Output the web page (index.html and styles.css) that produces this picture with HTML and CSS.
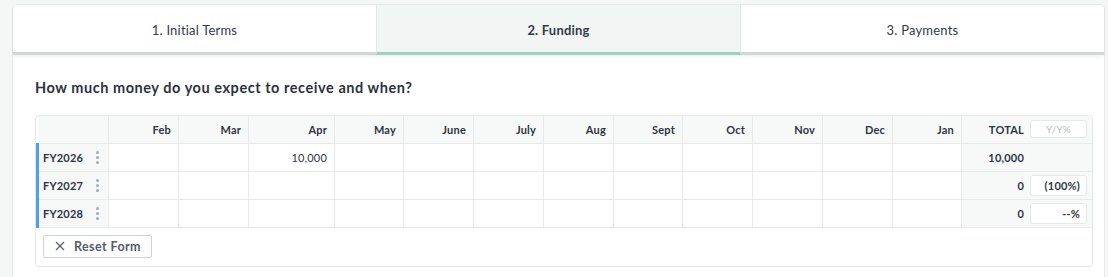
FILE: index.html
```html
<!DOCTYPE html>
<html>
<head>
<meta charset="utf-8">
<link rel="stylesheet" href="styles.css">
</head>
<body>
<div class="card">
  <div class="tabs">
    <div class="tab">1. Initial Terms</div>
    <div class="tab active">2. Funding</div>
    <div class="tab">3. Payments</div>
  </div>
  <div class="content">
    <h2 class="question">How much money do you expect to receive and when?</h2>
    <div class="grid-box">
      <table class="grid">
        <colgroup>
          <col class="c-label">
          <col class="c-m"><col class="c-m"><col class="c-apr"><col class="c-s">
          <col class="c-m"><col class="c-m"><col class="c-m"><col class="c-s">
          <col class="c-m"><col class="c-m"><col class="c-m"><col class="c-s">
          <col class="c-total">
        </colgroup>
        <thead>
          <tr>
            <th class="label-cell"></th>
            <th>Feb</th><th>Mar</th><th>Apr</th><th>May</th><th>June</th><th>July</th>
            <th>Aug</th><th>Sept</th><th>Oct</th><th>Nov</th><th>Dec</th><th>Jan</th>
            <th class="total-cell"><div class="total-wrap"><span>TOTAL</span><span class="pct placeholder">Y/Y%</span></div></th>
          </tr>
        </thead>
        <tbody>
          <tr>
            <td class="label-cell"><div class="label-wrap"><span>FY2026</span><span class="kebab"><i></i><i></i><i></i></span></div></td>
            <td></td><td></td><td>10,000</td><td></td><td></td><td></td>
            <td></td><td></td><td></td><td></td><td></td><td></td>
            <td class="total-cell"><div class="total-wrap"><span>10,000</span><span class="pct empty"></span></div></td>
          </tr>
          <tr>
            <td class="label-cell"><div class="label-wrap"><span>FY2027</span><span class="kebab"><i></i><i></i><i></i></span></div></td>
            <td></td><td></td><td></td><td></td><td></td><td></td>
            <td></td><td></td><td></td><td></td><td></td><td></td>
            <td class="total-cell"><div class="total-wrap"><span>0</span><span class="pct">(100%)</span></div></td>
          </tr>
          <tr>
            <td class="label-cell"><div class="label-wrap"><span>FY2028</span><span class="kebab"><i></i><i></i><i></i></span></div></td>
            <td></td><td></td><td></td><td></td><td></td><td></td>
            <td></td><td></td><td></td><td></td><td></td><td></td>
            <td class="total-cell"><div class="total-wrap"><span>0</span><span class="pct">--%</span></div></td>
          </tr>
        </tbody>
      </table>
      <div class="grid-footer">
        <button class="reset-btn">
          <svg width="10" height="10" viewBox="0 0 10 10"><path d="M1 1L9 9M9 1L1 9" stroke="#5b6270" stroke-width="1.3" fill="none"/></svg>
          <span>Reset Form</span>
        </button>
      </div>
    </div>
  </div>
</div>
</body>
</html>
```

FILE: styles.css
```css
* { box-sizing: border-box; }
html, body { margin: 0; padding: 0; }
body {
  background: #f5f6f6;
  font-family: "Lato", "Liberation Sans", sans-serif;
  color: #2e3544;
  padding: 4px 3px 0 12px;
}
.card {
  background: #fff;
  border: 1px solid #e6e8e8;
  border-bottom: none;
  border-radius: 5px 5px 0 0;
  height: 280px;
}
.tabs {
  display: flex;
  height: 50px;
  box-shadow: 0 2px 3px rgba(0,0,0,0.06);
}
.tab {
  flex: 1;
  display: flex;
  align-items: center;
  justify-content: center;
  font-size: 13px;
  letter-spacing: 0.2px;
  color: #333a48;
  border-bottom: 3px solid #d3d7da;
  padding-top: 2px;
}
.tab.active {
  background: #f1f6f5;
  border-bottom-color: #9fd1c2;
  border-left: 1px solid #e3e8e7;
  border-right: 1px solid #e3e8e7;
  font-weight: 700;
}
.tab:first-child { border-top-left-radius: 5px; }
.content {
  padding: 0 11px 0 22px;
}
.question {
  margin: 0;
  padding-top: 24px;
  height: 60px;
  font-size: 14.5px;
  font-weight: 700;
  color: #2b3240;
  letter-spacing: 0.55px;
}
.grid-box {
  border: 1px solid #e5e7e7;
  border-radius: 4px;
  overflow: hidden;
}
.grid {
  border-collapse: collapse;
  table-layout: fixed;
  width: 100%;
  font-size: 11px;
  letter-spacing: 0.2px;
}
.c-label { width: 71px; }
.c-m { width: 70px; }
.c-s { width: 69px; }
.c-apr { width: 86px; }
.c-total { width: auto; }
.grid th, .grid td {
  border-right: 1px solid #e8eaea;
  border-bottom: 1px solid #e8eaea;
  text-align: right;
  padding: 0 7px 0 4px;
  white-space: nowrap;
}
.grid th {
  height: 27px;
  background: #f7f8f8;
  font-weight: 700;
  color: #2e3544;
}
.grid td {
  height: 28px;
  color: #2e3544;
}
.grid th:last-child, .grid td:last-child { border-right: none; }
.grid td.label-cell, .grid th.label-cell {
  background: #f7f8f8;
  text-align: left;
  padding: 0;
}
.grid td.label-cell { border-left: 3px solid #4f9ff0; }
.label-wrap {
  display: flex;
  align-items: center;
  justify-content: space-between;
  padding: 0 9px 0 4px;
  font-weight: 700;
}
.kebab {
  display: flex;
  flex-direction: column;
  gap: 2px;
}
.kebab i {
  display: block;
  width: 3px;
  height: 3px;
  border-radius: 50%;
  background: #a7acb3;
}
.grid .total-cell {
  background: #f7f8f8;
  padding: 0 5px 0 4px;
}
.grid td.total-cell { font-weight: 700; }
.total-wrap {
  display: flex;
  justify-content: flex-end;
  align-items: center;
  gap: 6px;
}
.pct {
  width: 57px;
  height: 21px;
  border: 1px solid #e5e8e8;
  border-radius: 3px;
  background: #fff;
  display: flex;
  align-items: center;
  justify-content: flex-end;
  padding-right: 6px;
  font-weight: 700;
}
.pct.placeholder {
  height: 18px;
  justify-content: center;
  padding-right: 0;
  color: #b8bcc2;
  font-weight: 400;
  font-size: 10px;
}
.pct.empty { visibility: hidden; }
.grid-footer {
  padding: 7px 7px 8px;
}
.reset-btn {
  display: flex;
  align-items: center;
  gap: 9px;
  height: 23px;
  padding: 0 10px 0 11px;
  background: #fff;
  border: 1px solid #cfd2d6;
  border-radius: 2px;
  font-family: inherit;
  font-size: 12.5px;
  font-weight: 700;
  color: #555c68;
  letter-spacing: 0.4px;
}
```
